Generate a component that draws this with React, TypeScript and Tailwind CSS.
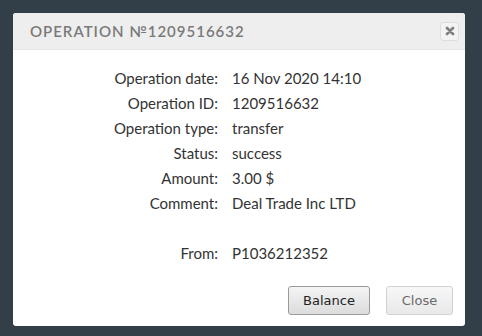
import React from 'react';

function App() {
  const rows = [
    { label: 'Operation date:', value: '16 Nov 2020 14:10' },
    { label: 'Operation ID:', value: '1209516632' },
    { label: 'Operation type:', value: 'transfer' },
    { label: 'Status:', value: 'success' },
    { label: 'Amount:', value: '3.00 $' },
    { label: 'Comment:', value: 'Deal Trade Inc LTD' },
    { label: '', value: '' },
    { label: 'From:', value: 'P1036212352' },
  ];

  return (
    <div className="w-[482px] h-[336px] bg-[#333f48] pt-[13px] pl-[13px] overflow-hidden">
      <div className="w-[452px] h-[313px] bg-white rounded-[3px] flex flex-col overflow-hidden">
        {/* header */}
        <div className="h-[37px] bg-[#eeeeee] border-b border-[#e4e4e4] flex items-center justify-between pl-[17px] pr-[6px]">
          <span className="font-['Lato',sans-serif] text-[15px] tracking-[1px] text-[#7a7a7a] font-semibold">
            OPERATION №1209516632
          </span>
          <button className="w-[19px] h-[19px] rounded-[3px] border border-[#dddddd] bg-[#f3f3f3] flex items-center justify-center">
            <svg width="10" height="10" viewBox="0 0 10 10">
              <path d="M2 2 L8 8 M8 2 L2 8" stroke="#808080" strokeWidth="2.8" strokeLinecap="round" />
            </svg>
          </button>
        </div>

        {/* details */}
        <div className="pt-[16px] font-['Lato',sans-serif] text-[15px] text-[#333333]">
          {rows.map((r, i) => (
            <div key={i} className="grid grid-cols-[205px_1fr] gap-x-[14px] h-[25px] items-center">
              <span className="text-right">{r.label}</span>
              <span>{r.value}</span>
            </div>
          ))}
        </div>

        {/* buttons */}
        <div className="mt-auto pb-[11px] pr-[12px] flex justify-end gap-[16px] font-['DejaVu_Sans',sans-serif] text-[13px]">
          <button className="w-[82px] h-[29px] rounded-[3px] border border-[#9a9a9a] bg-gradient-to-b from-[#f4f4f4] to-[#dcdcdc] text-[#222222]">
            Balance
          </button>
          <button className="w-[67px] h-[29px] rounded-[3px] border border-[#d2d2d2] bg-gradient-to-b from-[#f7f7f7] to-[#e9e9e9] text-[#6a6a6a]">
            Close
          </button>
        </div>
      </div>
    </div>
  );
}

export default App;
